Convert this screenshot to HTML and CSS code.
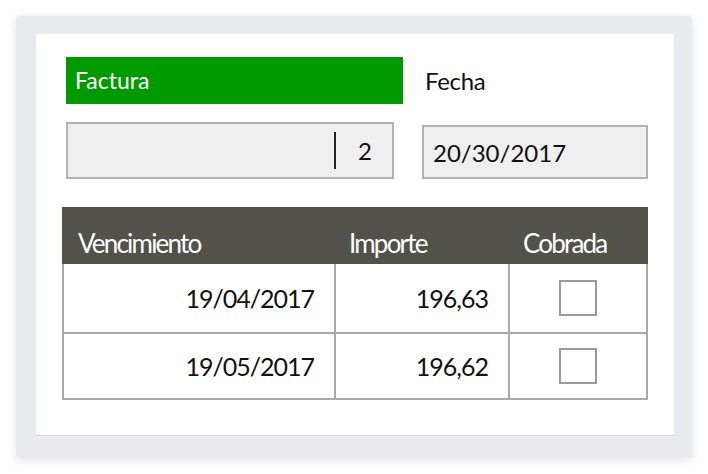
FILE: index.html
```html
<!DOCTYPE html>
<html lang="es">
<head>
<meta charset="UTF-8">
<title>Factura</title>
<link rel="stylesheet" href="styles.css">
</head>
<body>
  <div class="frame">
    <div class="sheet">
      <div class="top-row">
        <div class="title-bar">Factura</div>
        <div class="label">Fecha</div>
      </div>
      <div class="field-row">
        <div class="field field--number"><span class="caret"></span>2</div>
        <div class="field field--date">20/30/2017</div>
      </div>

      <div class="grid">
        <div class="head">Vencimiento</div>
        <div class="head">Importe</div>
        <div class="head">Cobrada</div>

        <div class="cell cell--first cell--tall num">19/04/2017</div>
        <div class="cell cell--tall num">196,63</div>
        <div class="cell cell--tall check"><span class="box"></span></div>

        <div class="cell cell--first num">19/05/2017</div>
        <div class="cell num">196,62</div>
        <div class="cell check"><span class="box"></span></div>
      </div>
    </div>
  </div>
</body>
</html>
```

FILE: styles.css
```css
body {
  margin: 0;
  background: #fff;
  font-family: Lato, "Open Sans", sans-serif;
  color: #111;
}

.frame {
  margin: 16px;
  width: 676px;
  height: 442px;
  box-sizing: border-box;
  padding: 18px 18px 0 20px;
  background: #e9eaee;
  border-radius: 4px;
  box-shadow: 0 2px 10px rgba(0, 0, 0, 0.12);
}

.sheet {
  height: 402px;
  box-sizing: border-box;
  padding: 23px 0 0 26px;
  background: #fff;
  border-bottom: 1px solid #d3d4d8;
}

.top-row {
  display: flex;
  align-items: center;
  margin-left: 4px;
}

.title-bar {
  width: 337px;
  height: 47px;
  box-sizing: border-box;
  padding-left: 9px;
  line-height: 47px;
  font-size: 23px;
  color: #fff;
  background: #009900;
}

.label {
  margin-left: 22px;
  font-size: 24px;
  letter-spacing: -0.3px;
}

.field-row {
  display: flex;
  align-items: flex-end;
  margin: 18px 0 0 4px;
}

.field {
  display: flex;
  align-items: center;
  box-sizing: border-box;
  background: #efefef;
  border: 2px solid #b2b2b2;
  font-size: 24px;
}

.field--number {
  width: 328px;
  height: 57px;
  justify-content: flex-end;
  padding-right: 20px;
}

.field--date {
  width: 226px;
  height: 54px;
  margin-left: 28px;
  padding-left: 9px;
}

.caret {
  width: 2px;
  height: 37px;
  margin-right: 22px;
  background: #222;
}

.grid {
  display: grid;
  grid-template-columns: 274px 174px 138px;
  margin-top: 28px;
}

.head {
  height: 57px;
  box-sizing: border-box;
  padding: 21px 0 0 13px;
  line-height: 30px;
  font-size: 26px;
  letter-spacing: -1.8px;
  color: #fff;
  background: #52524a;
}

.head:first-child {
  padding-left: 16px;
}

.cell {
  display: flex;
  align-items: center;
  height: 66px;
  box-sizing: border-box;
  border-right: 2px solid #a9a9a9;
  border-bottom: 2px solid #a9a9a9;
}

.cell--tall {
  height: 70px;
}

.cell--first {
  border-left: 2px solid #a9a9a9;
}

.num {
  justify-content: flex-end;
  padding-right: 20px;
  font-size: 25px;
  letter-spacing: -1px;
}

.check {
  justify-content: center;
}

.box {
  width: 38px;
  height: 36px;
  box-sizing: border-box;
  border: 2px solid #9a9a9a;
}
```
